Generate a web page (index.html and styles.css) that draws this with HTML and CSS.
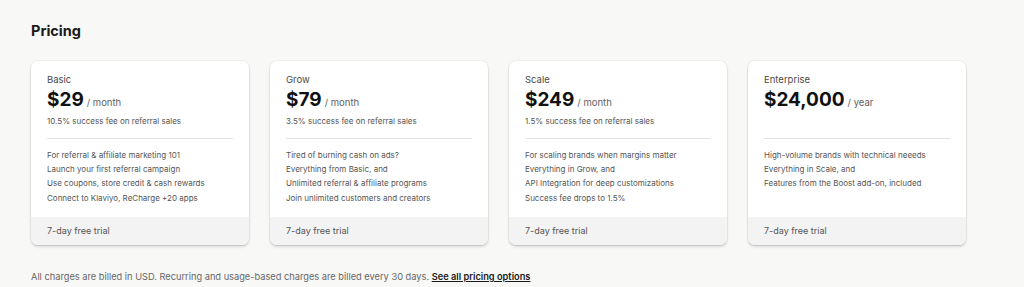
FILE: index.html
```html
<!DOCTYPE html>
<html lang="en">
<head>
    <meta charset="UTF-8">
    <meta name="viewport" content="width=device-width, initial-scale=1.0">
    <title>Pricing</title>
    <link rel="stylesheet" href="styles.css">
</head>
<body>
    <div class="page">
        <h1 class="title">Pricing</h1>

        <div class="plans">
            <div class="plan">
                <div class="plan-body">
                    <div class="plan-name">Basic</div>
                    <div class="plan-price"><span class="amount">$29</span><span class="period">/ month</span></div>
                    <div class="plan-fee">10.5% success fee on referral sales</div>
                    <ul class="plan-features">
                        <li>For referral &amp; affiliate marketing 101</li>
                        <li>Launch your first referral campaign</li>
                        <li>Use coupons, store credit &amp; cash rewards</li>
                        <li>Connect to Klaviyo, ReCharge +20 apps</li>
                    </ul>
                </div>
                <div class="plan-trial">7-day free trial</div>
            </div>

            <div class="plan">
                <div class="plan-body">
                    <div class="plan-name">Grow</div>
                    <div class="plan-price"><span class="amount">$79</span><span class="period">/ month</span></div>
                    <div class="plan-fee">3.5% success fee on referral sales</div>
                    <ul class="plan-features">
                        <li>Tired of burning cash on ads?</li>
                        <li>Everything from Basic, and</li>
                        <li>Unlimited referral &amp; affiliate programs</li>
                        <li>Join unlimited customers and creators</li>
                    </ul>
                </div>
                <div class="plan-trial">7-day free trial</div>
            </div>

            <div class="plan">
                <div class="plan-body">
                    <div class="plan-name">Scale</div>
                    <div class="plan-price"><span class="amount">$249</span><span class="period">/ month</span></div>
                    <div class="plan-fee">1.5% success fee on referral sales</div>
                    <ul class="plan-features">
                        <li>For scaling brands when margins matter</li>
                        <li>Everything in Grow, and</li>
                        <li>API Integration for deep customizations</li>
                        <li>Success fee drops to 1.5%</li>
                    </ul>
                </div>
                <div class="plan-trial">7-day free trial</div>
            </div>

            <div class="plan">
                <div class="plan-body">
                    <div class="plan-name">Enterprise</div>
                    <div class="plan-price"><span class="amount">$24,000</span><span class="period">/ year</span></div>
                    <div class="plan-fee"></div>
                    <ul class="plan-features">
                        <li>High-volume brands with technical neeeds</li>
                        <li>Everything in Scale, and</li>
                        <li>Features from the Boost add-on, included</li>
                    </ul>
                </div>
                <div class="plan-trial">7-day free trial</div>
            </div>
        </div>

        <p class="note">All charges are billed in USD. Recurring and usage-based charges are billed every 30 days. <a href="#" class="note-link">See all pricing options</a></p>
    </div>
</body>
</html>
```

FILE: styles.css
```css
* {
    margin: 0;
    padding: 0;
    box-sizing: border-box;
}

body {
    font-family: Inter, "Noto Sans", sans-serif;
    background: #f8f8f7;
    color: #303030;
}

.page {
    padding: 21px 31px 0;
    width: 997px;
}

.title {
    font-size: 14.5px;
    font-weight: 650;
    color: #1a1a1a;
    line-height: 20px;
    margin-bottom: 20px;
}

.plans {
    display: grid;
    grid-template-columns: repeat(4, 1fr);
    gap: 21px;
}

.plan {
    background: #fff;
    border-radius: 7px;
    box-shadow: 0 1px 0 rgba(0, 0, 0, 0.07), 0 0 0 1px rgba(0, 0, 0, 0.04), 0 2px 3px rgba(0, 0, 0, 0.12);
    overflow: hidden;
    height: 184px;
    display: flex;
    flex-direction: column;
}

.plan-body {
    flex: 1;
    padding: 12px 16px 0;
}

.plan-name {
    font-size: 9.5px;
    line-height: 14px;
    color: #4a4a4a;
}

.plan-price {
    display: flex;
    align-items: baseline;
    gap: 3px;
    height: 26px;
    line-height: 26px;
    color: #616161;
}

.amount {
    font-size: 19px;
    font-weight: 700;
    color: #111;
}

.period {
    font-size: 9.5px;
}

.plan-fee {
    font-size: 8px;
    line-height: 14px;
    height: 14px;
    margin-top: 1px;
    color: #555;
}

.plan-features {
    list-style: none;
    border-top: 1px solid #e3e3e3;
    margin-top: 10px;
    padding-top: 9px;
}

.plan-features li {
    font-size: 8px;
    line-height: 14.2px;
    color: #555;
}

.plan-trial {
    background: #f3f3f3;
    height: 28px;
    line-height: 28px;
    padding: 0 16px;
    font-size: 9px;
    color: #555;
}

.note {
    margin-top: 25px;
    font-size: 9.25px;
    color: #666;
    line-height: 14px;
}

.note-link {
    color: #1a1a1a;
    font-weight: 600;
    text-decoration: underline;
}
```
